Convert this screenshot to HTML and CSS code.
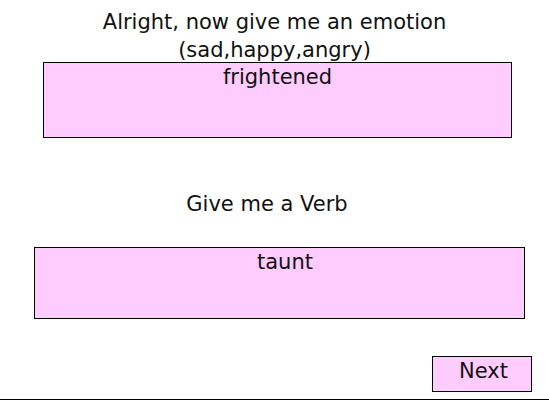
FILE: index.html
```html
<!DOCTYPE html>
<html>
<head>
    <link rel="stylesheet" href="styles.css">
</head>
<body>
    <div class="page">
        <div class="prompt">Alright, now give me an emotion<br>(sad,happy,angry)</div>
        <div class="answer emotion">frightened</div>

        <div class="prompt verb-prompt">Give me a Verb</div>
        <div class="answer verb">taunt</div>

        <div class="actions">
            <button class="next">Next</button>
        </div>
    </div>
</body>
</html>
```

FILE: styles.css
```css
html, body {
    margin: 0;
    padding: 0;
    background: #fff;
}
body {
    font-family: "DejaVu Sans", Verdana, sans-serif;
    font-size: 21px;
    line-height: 28px;
    color: #111;
}
.page {
    display: flex;
    flex-direction: column;
    height: 400px;
    box-sizing: border-box;
    padding-top: 8px;
    border-bottom: 1px solid #000;
}
.prompt {
    text-align: center;
}
.answer {
    background: #ffccff;
    border: 1px solid #000;
    box-sizing: border-box;
    text-align: center;
}
.emotion {
    margin: -2px 0 0 43px;
    width: 469px;
    height: 76px;
}
.verb-prompt {
    margin-top: 52px;
    padding-right: 15px;
}
.verb {
    margin: 29px 0 0 34px;
    width: 491px;
    height: 72px;
    padding-left: 11px;
}
.actions {
    margin: 37px 0 0 432px;
}
.next {
    display: block;
    width: 100px;
    height: 36px;
    padding: 0 0 6px 3px;
    background: #ffccff;
    border: 1px solid #000;
    border-radius: 0;
    font-family: inherit;
    font-size: 21px;
    line-height: 28px;
    color: #111;
}
```
